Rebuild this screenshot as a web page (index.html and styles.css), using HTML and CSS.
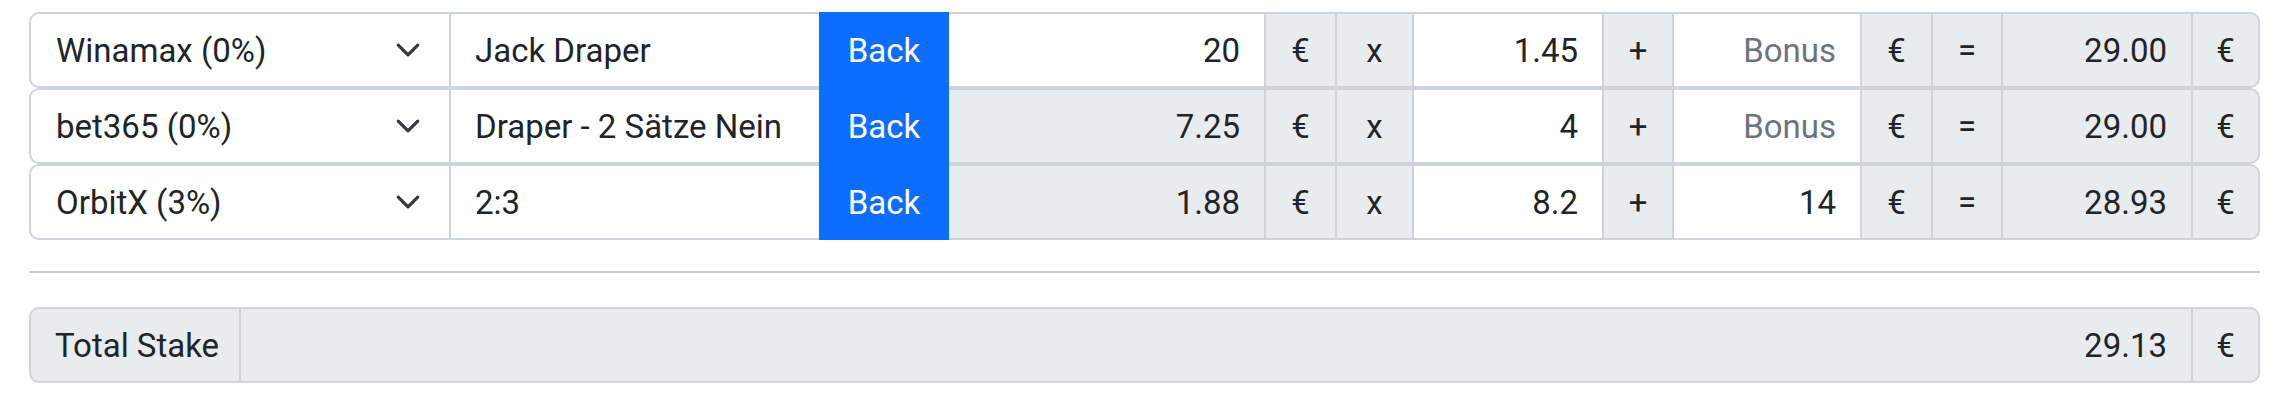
FILE: index.html
```html
<!DOCTYPE html>
<html lang="en">
<head>
  <meta charset="UTF-8" />
  <meta name="viewport" content="width=device-width, initial-scale=1.0"/>
  <title>Bet Calculator</title>
  <link rel="stylesheet" href="styles.css">
</head>
<body>

  <div class="page">
    <!-- one line per bet -->
    <div class="bets">
      <div class="line">
        <div class="picker">
          <span>Winamax (0%)</span>
          <svg class="chevron" viewBox="0 0 16 16"><path d="m2 5 6 6 6-6" fill="none" stroke="#343a40" stroke-width="2" stroke-linecap="round" stroke-linejoin="round"/></svg>
        </div>
        <input class="field name" type="text" value="Jack Draper">
        <button class="back">Back</button>
        <input class="field stake num" type="text" value="20">
        <span class="addon eur">€</span>
        <span class="addon op-x">x</span>
        <input class="field odds num" type="text" value="1.45">
        <span class="addon op-plus">+</span>
        <input class="field bonus num" type="text" placeholder="Bonus">
        <span class="addon eur">€</span>
        <span class="addon op-eq">=</span>
        <input class="field result num" type="text" value="29.00" readonly>
        <span class="addon eur last">€</span>
      </div>

      <div class="line">
        <div class="picker">
          <span>bet365 (0%)</span>
          <svg class="chevron" viewBox="0 0 16 16"><path d="m2 5 6 6 6-6" fill="none" stroke="#343a40" stroke-width="2" stroke-linecap="round" stroke-linejoin="round"/></svg>
        </div>
        <input class="field name" type="text" value="Draper - 2 Sätze Nein">
        <button class="back">Back</button>
        <input class="field stake num" type="text" value="7.25" readonly>
        <span class="addon eur">€</span>
        <span class="addon op-x">x</span>
        <input class="field odds num" type="text" value="4">
        <span class="addon op-plus">+</span>
        <input class="field bonus num" type="text" placeholder="Bonus">
        <span class="addon eur">€</span>
        <span class="addon op-eq">=</span>
        <input class="field result num" type="text" value="29.00" readonly>
        <span class="addon eur last">€</span>
      </div>

      <div class="line">
        <div class="picker">
          <span>OrbitX (3%)</span>
          <svg class="chevron" viewBox="0 0 16 16"><path d="m2 5 6 6 6-6" fill="none" stroke="#343a40" stroke-width="2" stroke-linecap="round" stroke-linejoin="round"/></svg>
        </div>
        <input class="field name" type="text" value="2:3">
        <button class="back">Back</button>
        <input class="field stake num" type="text" value="1.88" readonly>
        <span class="addon eur">€</span>
        <span class="addon op-x">x</span>
        <input class="field odds num" type="text" value="8.2">
        <span class="addon op-plus">+</span>
        <input class="field bonus num" type="text" value="14">
        <span class="addon eur">€</span>
        <span class="addon op-eq">=</span>
        <input class="field result num" type="text" value="28.93" readonly>
        <span class="addon eur last">€</span>
      </div>
    </div>

    <hr class="divider">

    <div class="line total">
      <span class="addon label">Total Stake</span>
      <input class="field sum num" type="text" value="29.13" readonly>
      <span class="addon eur last">€</span>
    </div>
  </div>

</body>
</html>
```

FILE: styles.css
```css
* {
  box-sizing: border-box;
}

body {
  margin: 0;
  background-color: #fff;
  font-family: "Roboto", "Liberation Sans", sans-serif;
  color: #212529;
}

.page {
  padding: 12px 14px 0 29px;
}

.line {
  display: flex;
  height: 76px;
}

.line > * {
  height: 76px;
  margin: 0 0 0 -2px;
  border: 2px solid #ced4da;
  border-radius: 0;
  font-family: inherit;
  font-size: 33px;
  color: #212529;
  background-color: #fff;
  flex-shrink: 0;
  white-space: nowrap;
}

.line > *:first-child {
  margin-left: 0;
  border-top-left-radius: 10px;
  border-bottom-left-radius: 10px;
}

.line > .last {
  border-top-right-radius: 10px;
  border-bottom-right-radius: 10px;
}

.picker {
  width: 422px;
  display: flex;
  align-items: center;
  justify-content: space-between;
  padding: 0 28px 0 25px;
}

.chevron {
  width: 26px;
  height: 26px;
}

.field {
  padding: 0 24px;
  outline: none;
}

.field::placeholder {
  color: #6c757d;
}

.field[readonly] {
  background-color: #e9ecef;
}

.num {
  text-align: right;
}

.name { width: 372px; }
.stake { width: 319px; }
.odds { width: 192px; }
.bonus { width: 190px; }
.result { width: 192px; }

.back {
  width: 130px;
  background-color: #0d6efd !important;
  border-color: #0d6efd !important;
  color: #fff !important;
  padding: 0;
  position: relative;
  z-index: 1;
}

.addon {
  display: flex;
  align-items: center;
  justify-content: center;
  background-color: #e9ecef !important;
}

.eur { width: 73px; }
.eur.last { width: 69px; }
.op-x { width: 79px; }
.op-plus { width: 72px; }
.op-eq { width: 72px; }

.divider {
  margin: 31px 0 34px;
  border: 0;
  border-top: 2px solid #c8c9cb;
}

.total .label {
  width: 212px;
  justify-content: flex-start;
  padding: 0 24px;
}

.total .sum {
  flex: 1;
}
```
